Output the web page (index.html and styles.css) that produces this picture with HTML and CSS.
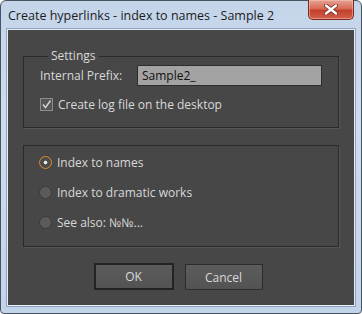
FILE: index.html
```html
<!DOCTYPE html>
<html lang="en">
<head>
    <meta charset="UTF-8">
    <title>Create hyperlinks - index to names - Sample 2</title>
    <link rel="stylesheet" href="styles.css">
</head>
<body>
    <div class="window">
        <div class="titlebar">
            <span class="title">Create hyperlinks - index to names - Sample 2</span>
            <button class="close-btn" aria-label="Close">
                <svg width="14" height="11" viewBox="0 0 14 11">
                    <path d="M2 1.5 L12 9.5 M12 1.5 L2 9.5" stroke="#7a2a20" stroke-width="4" stroke-linecap="round"/>
                    <path d="M2 1.5 L12 9.5 M12 1.5 L2 9.5" stroke="#ffffff" stroke-width="2.4" stroke-linecap="round"/>
                </svg>
            </button>
        </div>
        <div class="dialog">
            <fieldset class="group settings">
                <legend>Settings</legend>
                <div class="row">
                    <label for="prefix">Internal Prefix:</label>
                    <input type="text" id="prefix" value="Sample2_">
                </div>
                <div class="check-row">
                    <span class="checkbox">
                        <svg width="11" height="11" viewBox="0 0 11 11">
                            <path d="M2 5.5 L4.5 8.5 L9.5 1.5" fill="none" stroke="#d6d6d6" stroke-width="1.4"/>
                        </svg>
                    </span>
                    <span>Create log file on the desktop</span>
                </div>
            </fieldset>
            <fieldset class="group options">
                <div class="radio-row"><span class="radio checked"></span>Index to names</div>
                <div class="radio-row"><span class="radio"></span>Index to dramatic works</div>
                <div class="radio-row"><span class="radio"></span>See also: №№...</div>
            </fieldset>
            <div class="buttons">
                <button class="btn default">OK</button>
                <button class="btn">Cancel</button>
            </div>
        </div>
    </div>
</body>
</html>
```
FILE: styles.css
```css
body {
    margin: 0;
    background: #ffffff;
    font-family: 'Open Sans', 'DejaVu Sans', sans-serif;
    font-size: 12px;
}
.window {
    width: 362px;
    height: 314px;
    box-sizing: border-box;
    border: 1px solid #4a5360;
    border-radius: 6px 6px 4px 4px;
    background: linear-gradient(to bottom, #c4d5ea, #cddcef 40%, #c2d4ea);
    display: flex;
    flex-direction: column;
}
.titlebar {
    height: 28px;
    display: flex;
    justify-content: space-between;
    align-items: flex-start;
    padding-left: 7px;
}
.title {
    margin-top: 6px;
    color: #1c1c1c;
    font-size: 12.5px;
}
.close-btn {
    width: 46px;
    height: 20px;
    margin-top: -1px;
    margin-right: 7px;
    border: 1px solid #7b2a1f;
    border-top: none;
    border-radius: 0 0 5px 5px;
    background: linear-gradient(to bottom, #e6a394, #d76a56 45%, #c2402a 55%, #d2604a);
    box-shadow: inset 0 0 0 1px rgba(255, 200, 190, 0.5);
    display: flex;
    align-items: center;
    justify-content: center;
    padding: 0;
}
.dialog {
    flex: 1;
    margin: 0 6px 7px 6px;
    background: #474747;
    border: 1px solid #e8eef6;
    box-shadow: 0 0 0 1px #8ea3bd;
    padding: 19px 15px 0 15px;
    color: #d9d9d9;
}
.group {
    margin: 0;
    border: 1px solid #2a2a2a;
    box-shadow: 1px 1px 0 #565656;
}
.settings {
    height: 79px;
    box-sizing: border-box;
    padding: 2px 16px 0 16px;
}
.settings legend {
    padding: 0 3px;
    margin-left: 8px;
    color: #d9d9d9;
    line-height: 14px;
}
.row {
    display: flex;
    align-items: center;
    justify-content: space-between;
}
.row label {
    margin-top: -1px;
}
.row input {
    width: 185px;
    height: 21px;
    box-sizing: border-box;
    border: 1px solid #2c2c2c;
    background: #a3a3a3;
    color: #111;
    font-family: inherit;
    font-size: 12px;
    padding: 0 0 0 4px;
}
.check-row {
    display: flex;
    align-items: center;
    gap: 5px;
    margin-top: 10px;
}
.checkbox {
    width: 11px;
    height: 11px;
    border: 1px solid #8c8c8c;
    background: #565656;
    display: flex;
}
.options {
    height: 102px;
    box-sizing: border-box;
    margin-top: 17px;
    padding: 7px 16px 0 15px;
}
.radio-row {
    display: flex;
    align-items: center;
    gap: 5px;
    height: 18px;
    margin-bottom: 12px;
}
.radio {
    width: 13px;
    height: 13px;
    box-sizing: border-box;
    border-radius: 50%;
    border: 1px solid #3a3a3a;
    background: #5a5a5a;
}
.radio.checked {
    border: 1px solid #e08a2c;
    background: radial-gradient(circle, #e6e6e6 0 1.6px, #4a4a4a 2.2px);
}
.buttons {
    display: flex;
    justify-content: center;
    gap: 11px;
    margin-top: 16px;
    padding-right: 6px;
}
.btn {
    height: 26px;
    background: linear-gradient(to bottom, #5c5c5c, #535353);
    border: 1px solid #2c2c2c;
    color: #dadada;
    font-family: inherit;
    font-size: 12px;
    padding: 0;
}
.btn.default {
    width: 80px;
    height: 27px;
    border: 2px solid #232323;
}
.btn:not(.default) {
    width: 78px;
    margin-top: 1px;
}
```
